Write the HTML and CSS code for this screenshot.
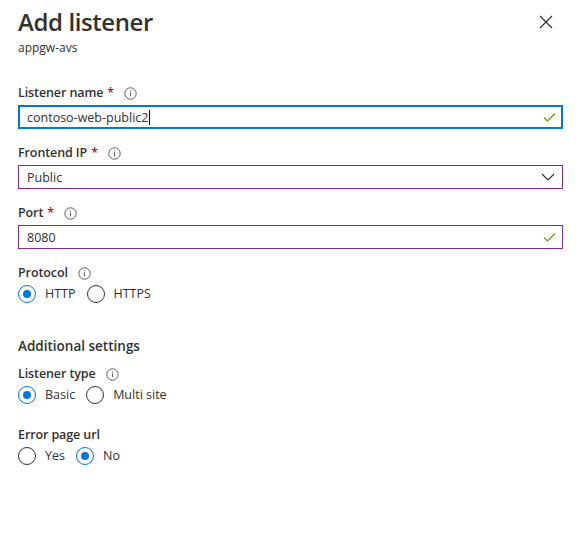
FILE: index.html
```html
<!DOCTYPE html>
<html>
<head>
<meta charset="utf-8">
<link rel="stylesheet" href="styles.css">
</head>
<body>
<div class="panel">
  <header class="head">
    <div class="titles">
      <h1 class="title">Add listener</h1>
      <div class="subtitle">appgw-avs</div>
    </div>
    <button class="close" aria-label="Close">
      <svg width="14" height="14" viewBox="0 0 14 14"><path d="M1 1L13 13M13 1L1 13" stroke="#323130" stroke-width="1.2" fill="none"/></svg>
    </button>
  </header>

  <div class="field f-name">
    <div class="label">Listener name <span class="req">*</span><span class="info"><svg width="13" height="13" viewBox="0 0 13 13"><circle cx="6.5" cy="6.5" r="5.7" stroke="#605e5c" stroke-width="1" fill="none"/><rect x="6" y="5.3" width="1" height="4" fill="#605e5c"/><rect x="6" y="3.3" width="1" height="1" fill="#605e5c"/></svg></span></div>
    <div class="box focused">
      <span class="val">contoso-web-public2<span class="caret"></span></span>
      <svg class="check" width="13" height="10" viewBox="0 0 13 10"><path d="M1 5.5L4.5 9L12 1.5" stroke="#57a300" stroke-width="1.2" fill="none"/></svg>
    </div>
  </div>

  <div class="field f-ip">
    <div class="label">Frontend IP <span class="req">*</span><span class="info"><svg width="13" height="13" viewBox="0 0 13 13"><circle cx="6.5" cy="6.5" r="5.7" stroke="#605e5c" stroke-width="1" fill="none"/><rect x="6" y="5.3" width="1" height="4" fill="#605e5c"/><rect x="6" y="3.3" width="1" height="1" fill="#605e5c"/></svg></span></div>
    <div class="box dirty">
      <span class="val">Public</span>
      <svg class="chev" width="14" height="8" viewBox="0 0 14 8"><path d="M1 1L7 7L13 1" stroke="#323130" stroke-width="1.2" fill="none"/></svg>
    </div>
  </div>

  <div class="field f-port">
    <div class="label">Port <span class="req">*</span><span class="info"><svg width="13" height="13" viewBox="0 0 13 13"><circle cx="6.5" cy="6.5" r="5.7" stroke="#605e5c" stroke-width="1" fill="none"/><rect x="6" y="5.3" width="1" height="4" fill="#605e5c"/><rect x="6" y="3.3" width="1" height="1" fill="#605e5c"/></svg></span></div>
    <div class="box dirty">
      <span class="val">8080</span>
      <svg class="check" width="13" height="10" viewBox="0 0 13 10"><path d="M1 5.5L4.5 9L12 1.5" stroke="#57a300" stroke-width="1.2" fill="none"/></svg>
    </div>
  </div>

  <div class="field f-proto">
    <div class="label">Protocol<span class="info"><svg width="13" height="13" viewBox="0 0 13 13"><circle cx="6.5" cy="6.5" r="5.7" stroke="#605e5c" stroke-width="1" fill="none"/><rect x="6" y="5.3" width="1" height="4" fill="#605e5c"/><rect x="6" y="3.3" width="1" height="1" fill="#605e5c"/></svg></span></div>
    <div class="radios">
      <label class="radio"><span class="dot on"></span>HTTP</label>
      <label class="radio"><span class="dot"></span>HTTPS</label>
    </div>
  </div>

  <h2 class="section">Additional settings</h2>

  <div class="field f-type">
    <div class="label">Listener type<span class="info"><svg width="13" height="13" viewBox="0 0 13 13"><circle cx="6.5" cy="6.5" r="5.7" stroke="#605e5c" stroke-width="1" fill="none"/><rect x="6" y="5.3" width="1" height="4" fill="#605e5c"/><rect x="6" y="3.3" width="1" height="1" fill="#605e5c"/></svg></span></div>
    <div class="radios">
      <label class="radio"><span class="dot on"></span>Basic</label>
      <label class="radio"><span class="dot"></span>Multi site</label>
    </div>
  </div>

  <div class="field f-err">
    <div class="label">Error page url</div>
    <div class="radios">
      <label class="radio"><span class="dot"></span>Yes</label>
      <label class="radio"><span class="dot on"></span>No</label>
    </div>
  </div>
</div>
</body>
</html>
```

FILE: styles.css
```css
html, body {
  margin: 0;
  padding: 0;
  background: #ffffff;
}
body {
  font-family: "Open Sans", "Noto Sans", sans-serif;
  color: #323130;
  width: 579px;
  height: 542px;
  overflow: hidden;
}
.panel {
  padding: 0 16px 0 18px;
  display: flex;
  flex-direction: column;
}
.head {
  display: flex;
  justify-content: space-between;
  align-items: flex-start;
  padding-top: 6px;
}
.title {
  margin: 0;
  font-size: 24px;
  line-height: 32px;
  font-weight: 600;
  letter-spacing: -0.4px;
}
.subtitle {
  font-size: 12px;
  line-height: 16px;
  margin-top: 2px;
  color: #323130;
}
.close {
  border: 0;
  background: none;
  padding: 0;
  margin: 9px 10px 0 0;
  width: 14px;
  height: 14px;
  display: flex;
}
.field {
  display: flex;
  flex-direction: column;
}
.f-name { margin-top: 28px; }
.f-ip { margin-top: 15px; }
.f-port { margin-top: 15px; }
.f-proto { margin-top: 15px; }
.f-type { margin-top: 9px; }
.f-err { margin-top: 21px; }
.label {
  font-size: 12.5px;
  line-height: 18px;
  font-weight: 600;
  display: flex;
  align-items: center;
  letter-spacing: -0.1px;
}
.req {
  color: #a4262c;
  margin-left: 4px;
}
.info {
  display: flex;
  margin-left: 10px;
}
.box {
  margin-top: 3px;
  height: 24px;
  box-sizing: border-box;
  display: flex;
  align-items: center;
  justify-content: space-between;
  padding: 0 6px 0 8px;
  font-size: 12.5px;
}
.box.focused {
  border: 2px solid #0078d4;
  padding-left: 7px;
  padding-right: 5px;
}
.box.dirty {
  border: 1px solid #7e2ba0;
}
.val {
  display: flex;
  align-items: center;
}
.caret {
  display: inline-block;
  width: 1px;
  height: 15px;
  background: #000;
  margin-left: 1px;
}
.chev { margin-right: 1px; }
.radios {
  display: flex;
  gap: 11px;
  margin-top: 2px;
}
.radio {
  display: flex;
  align-items: center;
  font-size: 12.5px;
  line-height: 20px;
}
.dot {
  width: 18px;
  height: 18px;
  box-sizing: border-box;
  border: 1px solid #323130;
  border-radius: 50%;
  margin-right: 9px;
  position: relative;
}
.dot.on {
  border-color: #0078d4;
}
.dot.on::after {
  content: "";
  position: absolute;
  left: 4px;
  top: 4px;
  width: 8px;
  height: 8px;
  border-radius: 50%;
  background: #0078d4;
}
.section {
  margin: 32px 0 0;
  font-size: 13.5px;
  line-height: 20px;
  font-weight: 600;
}
```
